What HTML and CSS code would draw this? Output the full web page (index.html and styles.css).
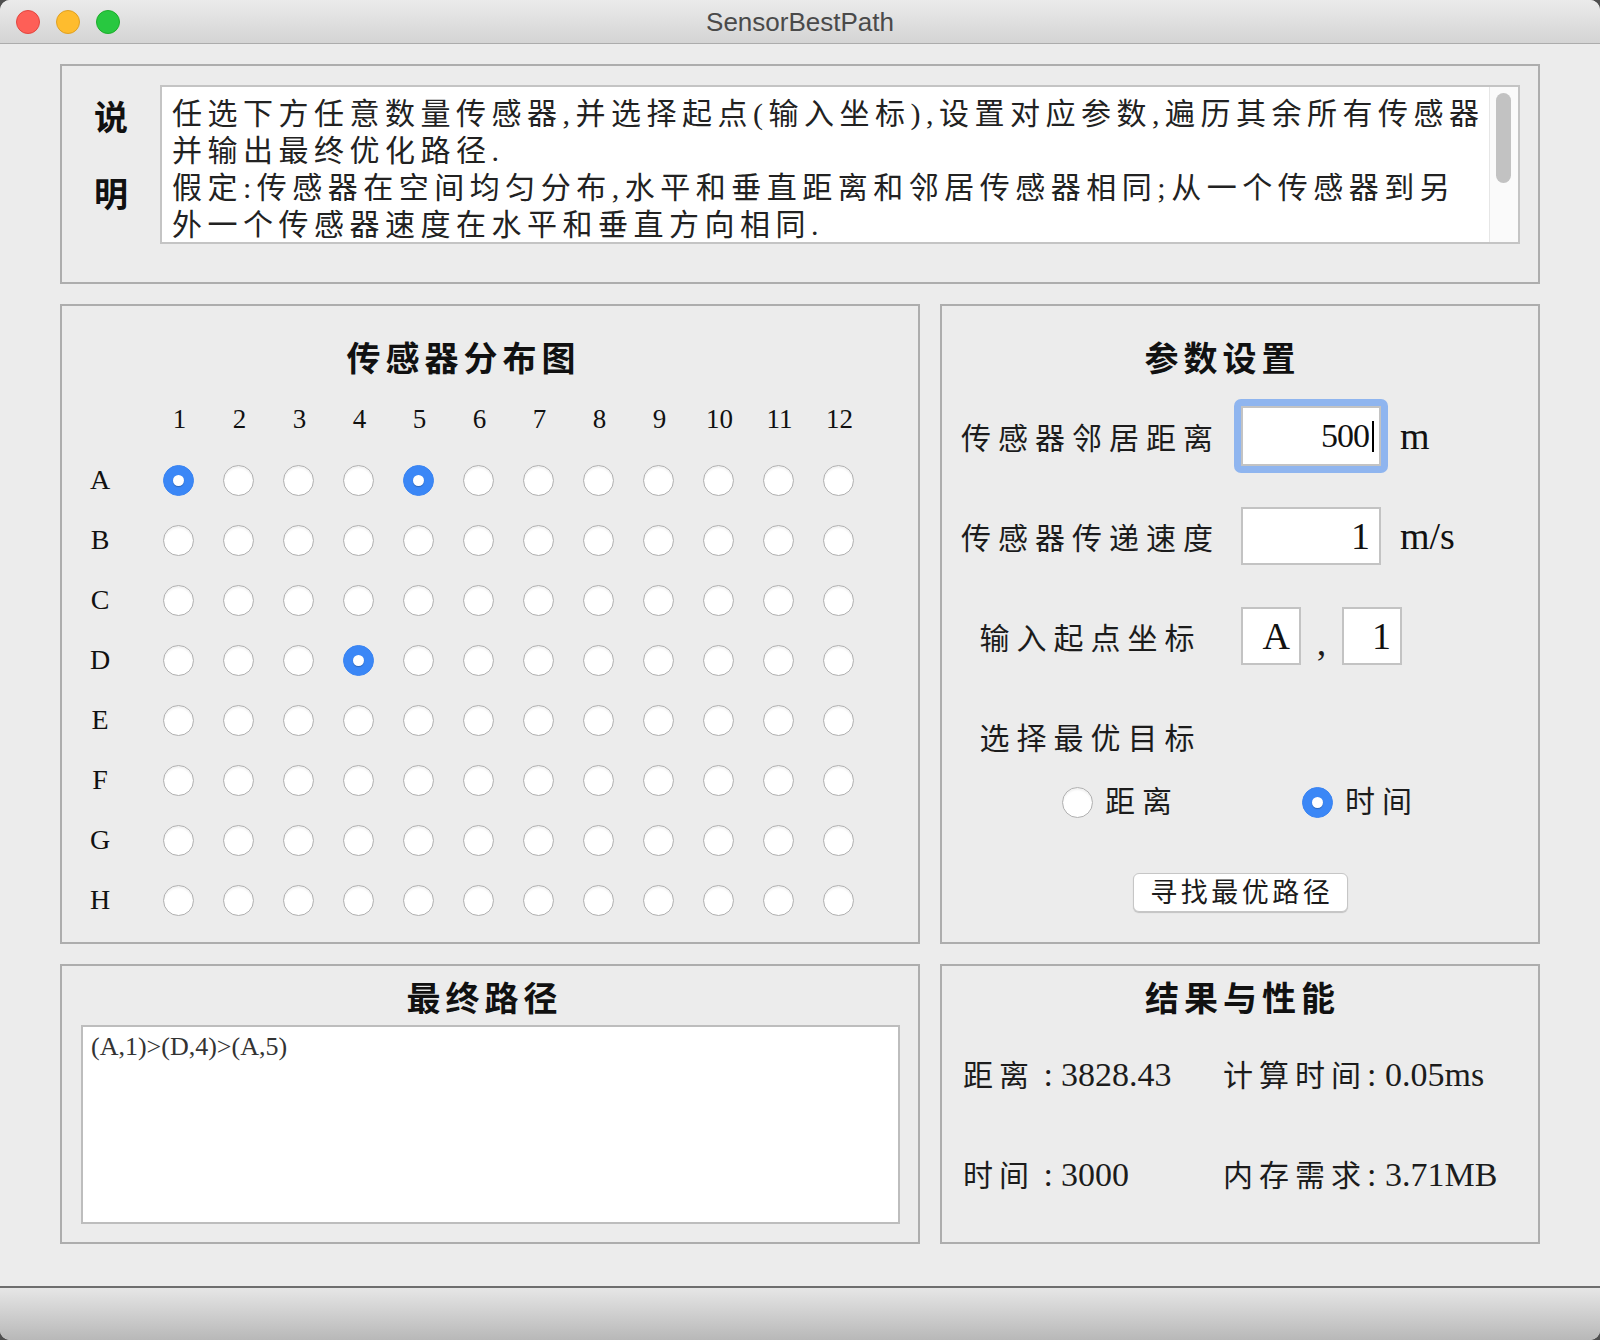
FILE: index.html
```html
<!DOCTYPE html>
<html lang="zh">
<head>
<meta charset="utf-8">
<title>SensorBestPath</title>
<link rel="stylesheet" href="styles.css">
</head>
<body>
<div class="window">
  <header class="titlebar">
    <div class="lights">
      <span class="light red"></span>
      <span class="light yellow"></span>
      <span class="light green"></span>
    </div>
    <div class="wintitle">SensorBestPath</div>
    <div></div>
  </header>

  <main class="content">
    <section class="panel desc">
      <div class="desc-label"><span>说</span><span>明</span></div>
      <div class="textarea">
        <div class="ta-text">任选下方任意数量传感器,并选择起点(输入坐标),设置对应参数,遍历其余所有传感器<br>并输出最终优化路径.<br>假定:传感器在空间均匀分布,水平和垂直距离和邻居传感器相同;从一个传感器到另<br>外一个传感器速度在水平和垂直方向相同.</div>
        <div class="scrollbar"><div class="thumb"></div></div>
      </div>
    </section>

    <section class="panel sensor">
      <h2 class="panel-title"><span>传感器分布图</span></h2>
      <div class="grid">
        <div></div>
        <div class="colnum">1</div><div class="colnum">2</div><div class="colnum">3</div><div class="colnum">4</div><div class="colnum">5</div><div class="colnum">6</div><div class="colnum">7</div><div class="colnum">8</div><div class="colnum">9</div><div class="colnum">10</div><div class="colnum">11</div><div class="colnum">12</div>

        <div class="rowlab">A</div>
        <span class="r on"></span><span class="r"></span><span class="r"></span><span class="r"></span><span class="r on"></span><span class="r"></span><span class="r"></span><span class="r"></span><span class="r"></span><span class="r"></span><span class="r"></span><span class="r"></span>
        <div class="rowlab">B</div>
        <span class="r"></span><span class="r"></span><span class="r"></span><span class="r"></span><span class="r"></span><span class="r"></span><span class="r"></span><span class="r"></span><span class="r"></span><span class="r"></span><span class="r"></span><span class="r"></span>
        <div class="rowlab">C</div>
        <span class="r"></span><span class="r"></span><span class="r"></span><span class="r"></span><span class="r"></span><span class="r"></span><span class="r"></span><span class="r"></span><span class="r"></span><span class="r"></span><span class="r"></span><span class="r"></span>
        <div class="rowlab">D</div>
        <span class="r"></span><span class="r"></span><span class="r"></span><span class="r on"></span><span class="r"></span><span class="r"></span><span class="r"></span><span class="r"></span><span class="r"></span><span class="r"></span><span class="r"></span><span class="r"></span>
        <div class="rowlab">E</div>
        <span class="r"></span><span class="r"></span><span class="r"></span><span class="r"></span><span class="r"></span><span class="r"></span><span class="r"></span><span class="r"></span><span class="r"></span><span class="r"></span><span class="r"></span><span class="r"></span>
        <div class="rowlab">F</div>
        <span class="r"></span><span class="r"></span><span class="r"></span><span class="r"></span><span class="r"></span><span class="r"></span><span class="r"></span><span class="r"></span><span class="r"></span><span class="r"></span><span class="r"></span><span class="r"></span>
        <div class="rowlab">G</div>
        <span class="r"></span><span class="r"></span><span class="r"></span><span class="r"></span><span class="r"></span><span class="r"></span><span class="r"></span><span class="r"></span><span class="r"></span><span class="r"></span><span class="r"></span><span class="r"></span>
        <div class="rowlab">H</div>
        <span class="r"></span><span class="r"></span><span class="r"></span><span class="r"></span><span class="r"></span><span class="r"></span><span class="r"></span><span class="r"></span><span class="r"></span><span class="r"></span><span class="r"></span><span class="r"></span>
      </div>
    </section>

    <section class="panel params">
      <h2 class="panel-title"><span>参数设置</span></h2>
      <div class="prow first">
        <div class="plabel"><span>传感器邻居距离</span></div>
        <div class="field focus"><div class="input tall focused">500<span class="caret"></span></div></div>
        <div class="unit">m</div>
      </div>
      <div class="prow">
        <div class="plabel"><span>传感器传递速度</span></div>
        <div class="field"><div class="input">1</div></div>
        <div class="unit">m/s</div>
      </div>
      <div class="prow">
        <div class="plabel"><span>输入起点坐标</span></div>
        <div class="field"><div class="input small">A</div></div>
        <div class="comma">,</div>
        <div class="field"><div class="input small">1</div></div>
      </div>
      <div class="prow">
        <div class="plabel"><span>选择最优目标</span></div>
      </div>
      <div class="choice">
        <div class="opt"><span class="r"></span><span class="optlab">距离</span></div>
        <div class="opt"><span class="r on"></span><span class="optlab">时间</span></div>
      </div>
      <button class="btn"><span>寻找最优路径</span></button>
    </section>

    <section class="panel path">
      <h2 class="panel-title"><span>最终路径</span></h2>
      <div class="pathbox">(A,1)&gt;(D,4)&gt;(A,5)</div>
    </section>

    <section class="panel results">
      <h2 class="panel-title"><span>结果与性能</span></h2>
      <div class="stats">
        <div class="stat"><span class="k">距离</span> :<span class="v gap">3828.43</span></div>
        <div class="stat"><span class="k">计算时间</span>: <span class="v">0.05ms</span></div>
        <div class="stat"><span class="k">时间</span> :<span class="v gap">3000</span></div>
        <div class="stat"><span class="k">内存需求</span>: <span class="v">3.71MB</span></div>
      </div>
    </section>
  </main>

  <footer class="statusbar"></footer>
</div>
</body>
</html>
```

FILE: styles.css
```css
* { box-sizing: border-box; }

html, body {
  margin: 0;
  padding: 0;
}

body {
  background: #4f4f4f;
  font-family: "Liberation Serif", "Noto Sans CJK SC", serif;
  color: #1c1c1c;
}

.window {
  width: 1600px;
  height: 1340px;
  background: #ececec;
  border-radius: 10px;
  overflow: hidden;
  display: flex;
  flex-direction: column;
}

/* ---------- title bar ---------- */
.titlebar {
  height: 44px;
  flex: none;
  display: grid;
  grid-template-columns: 1fr auto 1fr;
  align-items: center;
  background: linear-gradient(#ebebeb, #d4d4d4);
  border-bottom: 1px solid #acacac;
}

.lights {
  display: flex;
  gap: 16px;
  padding-left: 16px;
}

.light {
  width: 24px;
  height: 24px;
  border-radius: 50%;
}

.red { background: #fe5f57; border: 1px solid #e2463f; }
.yellow { background: #febc2e; border: 1px solid #dfa023; }
.green { background: #28c840; border: 1px solid #1dad2b; }

.wintitle {
  font-family: "Liberation Sans", "Noto Sans", sans-serif;
  font-size: 26px;
  color: #4a4a4a;
  padding-top: 2px;
}

/* ---------- layout ---------- */
.content {
  flex: 1;
  padding: 20px 60px 0;
  display: grid;
  grid-template-columns: 860px 600px;
  grid-template-rows: 220px 640px 280px;
  gap: 20px;
}

.panel {
  border: 2px solid #adadad;
  min-width: 0;
}

.panel-title {
  margin: 0;
  font-family: "Noto Sans CJK SC", sans-serif;
  font-weight: 700;
  font-size: 34px;
  line-height: 40px;
  text-align: center;
  color: #111;
  white-space: nowrap;
}

.panel-title span {
  letter-spacing: 5px;
  margin-right: -5px;
}

/* ---------- description ---------- */
.desc {
  grid-column: 1 / 3;
  display: flex;
  padding: 19px 18px 0 0;
}

.desc-label {
  width: 98px;
  flex: none;
  display: flex;
  flex-direction: column;
  align-items: center;
  gap: 37px;
  padding-top: 11px;
  font-family: "Noto Sans CJK SC", sans-serif;
  font-weight: 700;
  font-size: 34px;
  line-height: 40px;
  color: #111;
}

.textarea {
  flex: 1;
  height: 159px;
  display: flex;
  background: #fff;
  border: 2px solid #c4c4c4;
}

.ta-text {
  flex: 1;
  min-width: 0;
  overflow: hidden;
  white-space: nowrap;
  padding: 8px 0 0 10px;
  font-size: 30px;
  line-height: 37px;
  letter-spacing: 5.5px;
  color: #222;
}

.scrollbar {
  width: 29px;
  flex: none;
  background: #fafafa;
  border-left: 1px solid #e6e6e6;
  padding-top: 6px;
}

.thumb {
  width: 15px;
  height: 90px;
  margin-left: 6px;
  border-radius: 8px;
  background: #c2c2c2;
}

/* ---------- sensor grid ---------- */
.sensor {
  padding-top: 31px;
}

.sensor .panel-title {
  padding-right: 58px;
}

.grid {
  margin: 11px 0 0 8px;
  display: grid;
  grid-template-columns: 78px repeat(12, 60px);
  grid-template-rows: 62px repeat(8, 60px);
  align-items: center;
  justify-items: center;
}

.colnum {
  font-size: 27px;
  color: #111;
  padding-left: 3px;
}

.rowlab {
  justify-self: start;
  width: 60px;
  text-align: center;
  font-size: 28px;
  color: #111;
}

.r {
  width: 31px;
  height: 31px;
  flex: none;
  border-radius: 50%;
  background: #fff;
  border: 1px solid #b0b0b0;
  box-shadow: inset 0 2px 2px rgba(0, 0, 0, 0.06);
  display: grid;
  place-items: center;
}

.r.on {
  background: #3b87f6;
  border-color: #3a84f2;
  box-shadow: none;
}

.r.on::after {
  content: "";
  width: 11px;
  height: 11px;
  border-radius: 50%;
  background: #fff;
  box-shadow: 0 1px 1px rgba(0, 0, 0, 0.25);
}

/* ---------- parameters ---------- */
.params {
  padding-top: 31px;
}

.params .panel-title {
  padding-right: 40px;
}

.prow {
  height: 100px;
  display: flex;
  align-items: center;
  padding-left: 15px;
}

.prow.first {
  margin-top: 9px;
}

.plabel {
  width: 260px;
  flex: none;
  text-align: center;
  white-space: nowrap;
  font-size: 30px;
  color: #1c1c1c;
}

.plabel span {
  letter-spacing: 7px;
  margin-right: -7px;
}

.field {
  padding: 7px;
  margin-left: 17px;
  border-radius: 7px;
}

.field.focus {
  background: #8fb5ef;
}

.input {
  width: 140px;
  height: 58px;
  background: #fff;
  border: 2px solid #c3c3c3;
  display: flex;
  align-items: center;
  justify-content: flex-end;
  padding-right: 9px;
  font-size: 38px;
  color: #111;
}

.input.tall {
  height: 60px;
}

.input.focused {
  font-size: 34px;
  letter-spacing: -1px;
  padding-right: 5px;
}

.caret {
  display: inline-block;
  width: 2px;
  height: 31px;
  margin-left: 3px;
  background: #000;
}

.input.small {
  width: 60px;
}

.unit {
  margin-left: 12px;
  font-size: 38px;
  color: #111;
}

.comma {
  width: 27px;
  text-align: center;
  font-size: 38px;
  padding-top: 12px;
}

.prow .comma + .field {
  margin-left: 0;
}

.choice {
  height: 32px;
  display: grid;
  grid-template-columns: 240px auto;
  align-items: center;
  padding-left: 120px;
}

.opt {
  height: 32px;
  display: flex;
  align-items: center;
  gap: 12px;
}

.optlab {
  font-size: 30px;
  line-height: 32px;
  letter-spacing: 7px;
  color: #1c1c1c;
  white-space: nowrap;
}

.btn {
  display: block;
  width: 215px;
  height: 39px;
  margin: 55px auto 0;
  padding: 0;
  background: #fff;
  border: 1px solid #c6c6c6;
  border-radius: 6px;
  box-shadow: 0 1px 1px rgba(0, 0, 0, 0.18);
  font-family: "Liberation Serif", "Noto Sans CJK SC", serif;
  font-size: 27px;
  line-height: 36px;
  color: #1c1c1c;
  white-space: nowrap;
}

.btn span {
  letter-spacing: 3.5px;
  margin-right: -3.5px;
}

/* ---------- final path ---------- */
.path {
  padding-top: 11px;
}

.path .panel-title {
  padding-right: 16px;
}

.pathbox {
  margin: 8px 18px 0 19px;
  height: 199px;
  background: #fff;
  border: 2px solid #bdbdbd;
  padding: 5px 8px;
  font-size: 26px;
  line-height: 30px;
  color: #333;
}

/* ---------- results ---------- */
.results {
  padding-top: 11px;
}

.stats {
  margin-top: 6px;
  display: grid;
  grid-template-columns: 260px auto;
  grid-auto-rows: 100px;
  align-items: center;
  padding-left: 21px;
}

.stat {
  font-size: 34px;
  color: #1c1c1c;
  white-space: nowrap;
}

.stat .k {
  font-size: 30px;
  letter-spacing: 6px;
}

.stat .v.gap {
  margin-left: 8px;
}

/* ---------- bottom bar ---------- */
.statusbar {
  height: 54px;
  flex: none;
  border-top: 2px solid #6e6e6e;
  background: linear-gradient(#e6e6e6, #b8b8b8);
}
```
